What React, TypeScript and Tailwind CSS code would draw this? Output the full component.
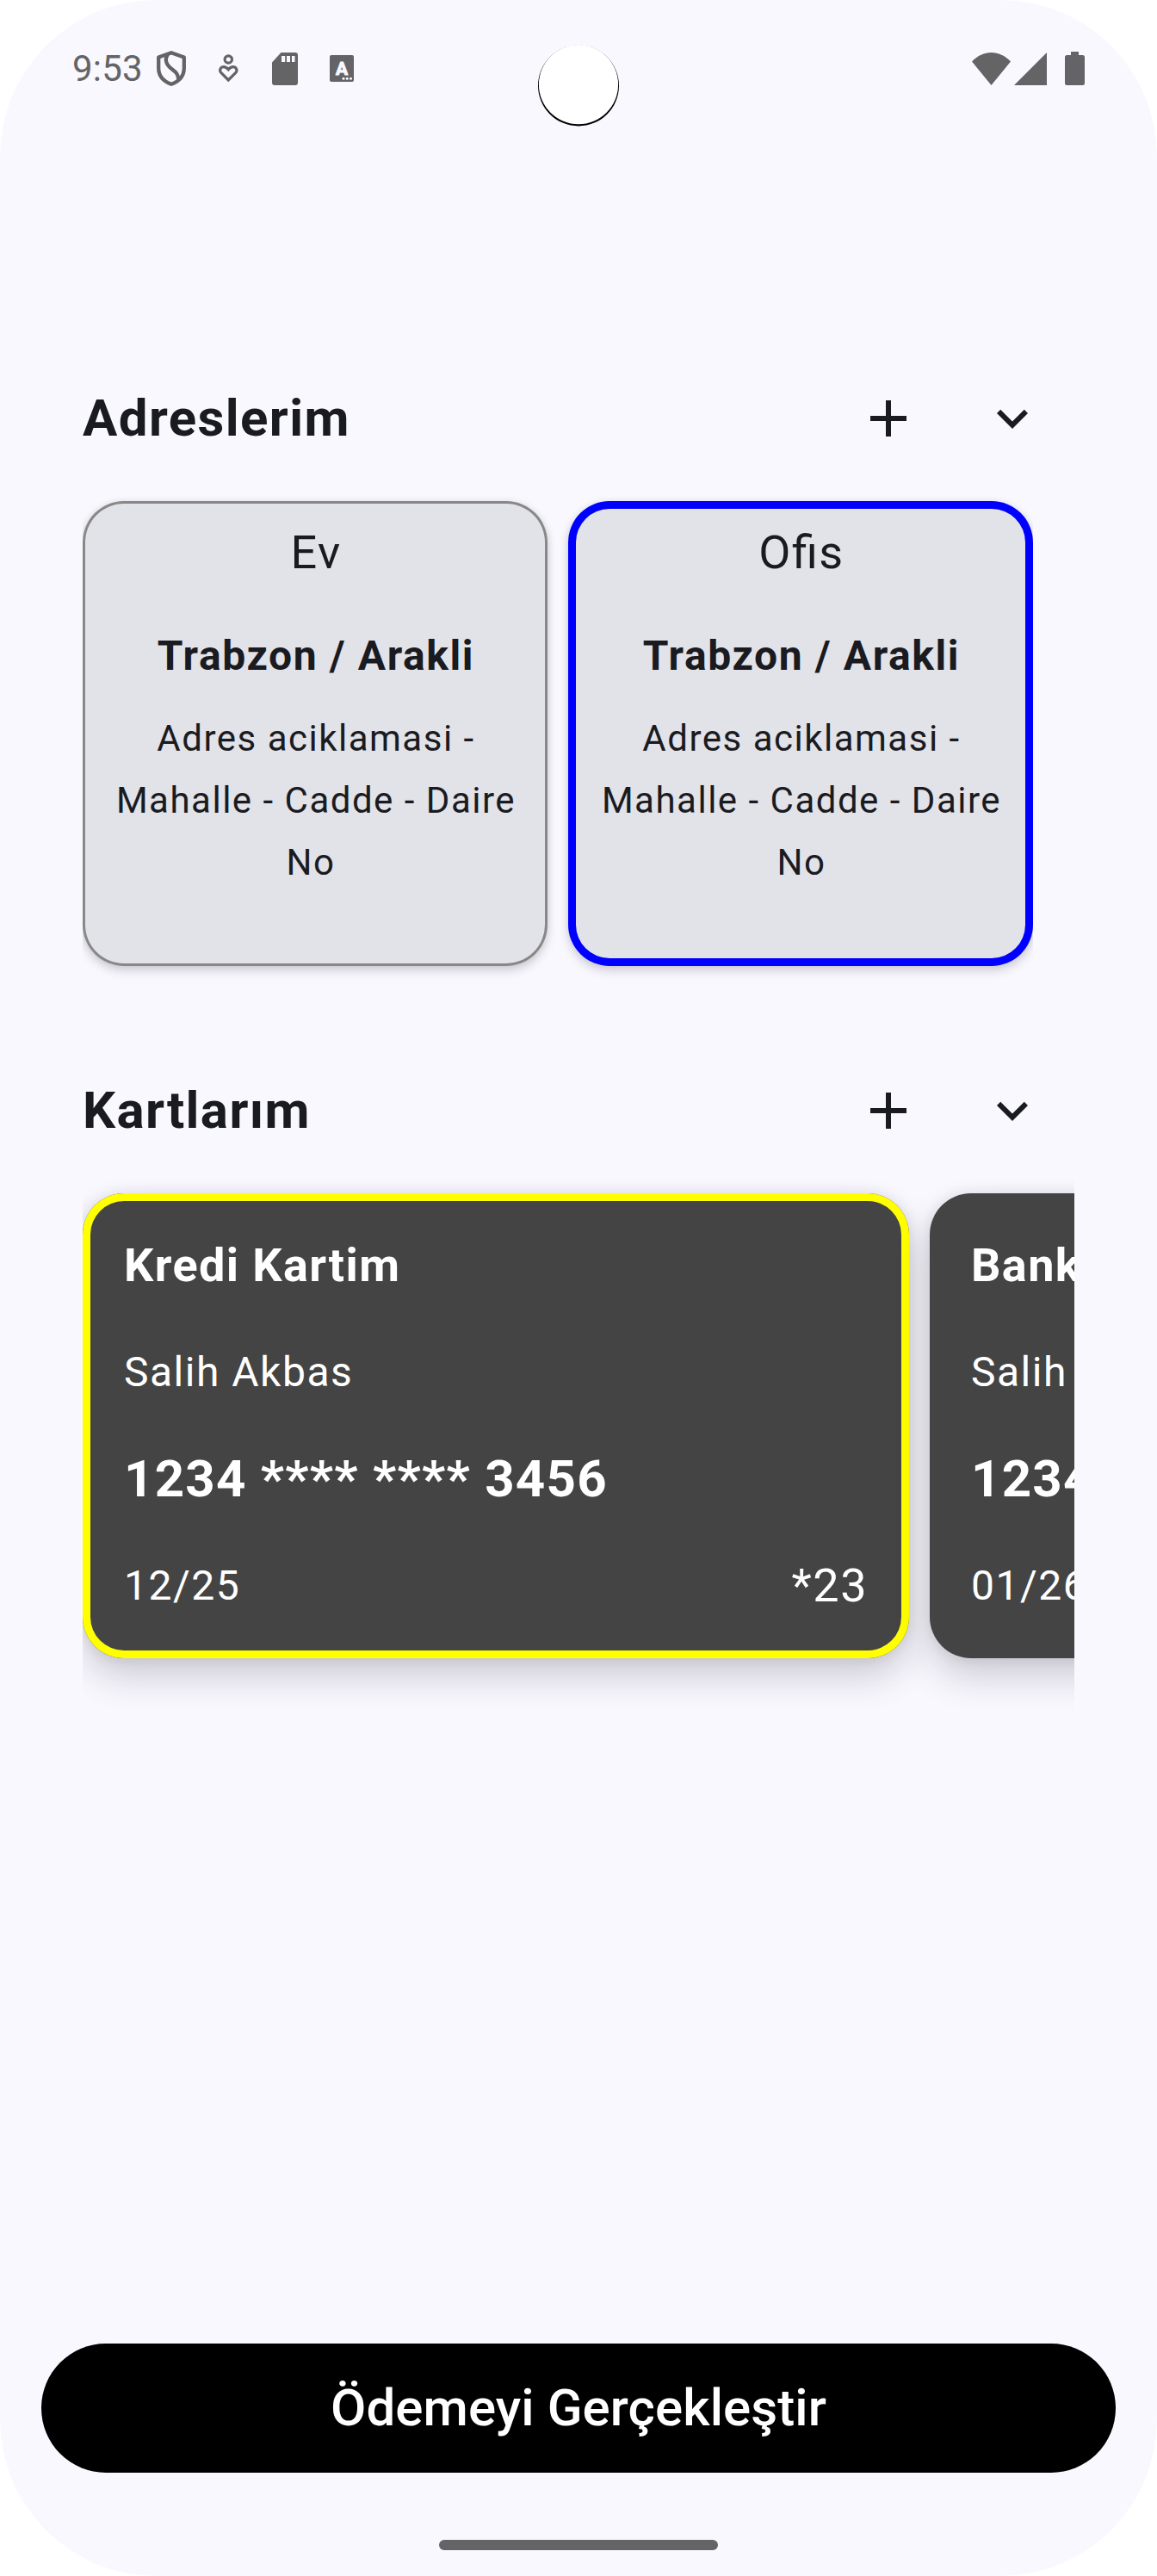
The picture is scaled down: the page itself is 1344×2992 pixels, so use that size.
const ink = "#646466";

function ShieldIcon() {
  return (
    <svg width="34" height="41" viewBox="0 0 34 41" fill="none" stroke={ink} strokeWidth="4.3" strokeLinejoin="round">
      <path d="M17 2.200 31.800 7.500V20C31.800 29.500 26 35.500 17 38.800 8 35.500 2.200 29.500 2.200 20V7.500Z" />
      <path d="M13 4C9.500 9 10.500 14.500 14.500 18.500 19 23 25.500 25 25 33" />
    </svg>
  );
}

function CareIcon() {
  return (
    <svg width="23" height="33" viewBox="0 0 23 33" fill="none" stroke={ink} strokeWidth="3.2">
      <circle cx="11.3" cy="6" r="4.200" />
      <path d="M11.300 30 3 21.700C0 18.500 2.500 14.700 6 14.700 8.500 14.700 10 16.200 11.300 17.800 12.600 16.200 14.100 14.700 16.600 14.700 20.100 14.700 22.600 18.500 19.600 21.700Z" />
    </svg>
  );
}

function SdCardIcon() {
  return (
    <svg width="30" height="38" viewBox="0 0 30 38" fill={ink}>
      <path
        fillRule="evenodd"
        d="M10.500 0H27A3 3 0 0 1 30 3V35A3 3 0 0 1 27 38H3A3 3 0 0 1 0 35V11.500ZM11 4V11H15.200V4ZM17 4V11H21V4ZM23 4V11H26.500V4Z"
      />
    </svg>
  );
}

function LetterIcon() {
  return (
    <svg width="28" height="31" viewBox="0 0 28 31">
      <rect width="28" height="31" rx="2" fill={ink} />
      <text
        x="14"
        y="22.800"
        textAnchor="middle"
        fontFamily="Roboto"
        fontWeight="700"
        fontSize="21"
        fill="#f9f8ff"
        stroke="#f9f8ff"
        strokeWidth="1"
        strokeLinejoin="round"
      >
        A
      </text>
      <g fill="#f9f8ff">
        <circle cx="16" cy="27.200" r="1.500" />
        <circle cx="20.300" cy="27.200" r="1.500" />
        <circle cx="24.500" cy="27.200" r="1.500" />
      </g>
    </svg>
  );
}

function StatusBar() {
  return (
    <div className="relative flex h-[159px] items-center justify-between pr-[84px] pl-[84px]">
      <div className="flex items-center">
        <span className="mr-[16px] w-[82px] text-[42px] leading-[48px] tracking-[0.2px] text-[#646466]">9:53</span>
        <ShieldIcon />
        <span className="w-[38px]" />
        <CareIcon />
        <span className="w-[39px]" />
        <SdCardIcon />
        <span className="w-[37px]" />
        <LetterIcon />
      </div>
      <div className="flex items-center">
        <svg width="45" height="38" viewBox="0 0 45 38" fill={ink}>
          <path d="M0 10.500C13-3.500 32-3.500 45 10.500L22.500 38Z" />
        </svg>
        <svg className="ml-[4px]" width="38" height="38" viewBox="0 0 38 38" fill={ink}>
          <path d="M38 0V38H0Z" />
        </svg>
        <svg className="ml-[21px]" width="23" height="39" viewBox="0 0 23 39" fill={ink}>
          <path d="M7 0H16V4H20.500A2.500 2.500 0 0 1 23 6.500V36.500A2.500 2.500 0 0 1 20.500 39H2.500A2.500 2.500 0 0 1 0 36.500V6.500A2.500 2.500 0 0 1 2.500 4H7Z" />
        </svg>
      </div>
      <svg className="absolute top-[50px] left-[622px]" width="100" height="100" viewBox="0 0 100 100">
        <circle cx="50" cy="49.400" r="47" fill="#000" />
        <circle cx="50" cy="48.200" r="46.100" fill="#fff" />
      </svg>
    </div>
  );
}

function SectionHeader({ title }: { title: string }) {
  return (
    <div className="flex h-[144px] items-center">
      <h2 className="flex-1 text-[60px] leading-[72px] font-bold tracking-[1.4px]">{title}</h2>
      <button className="flex size-[144px] items-center justify-center">
        <svg width="72" height="72" viewBox="0 0 24 24" fill="#1a1b20">
          <path d="M19 13h-6v6h-2v-6H5v-2h6V5h2v6h6z" />
        </svg>
      </button>
      <button className="flex size-[144px] items-center justify-center">
        <svg width="72" height="72" viewBox="0 0 24 24" fill="#1a1b20">
          <path d="M7.410 8.590 12 13.170l4.590-4.580L18 10l-6 6-6-6z" />
        </svg>
      </button>
    </div>
  );
}

function AddressCard({ name, lines, selected }: { name: string; lines: string[]; selected?: boolean }) {
  return (
    <div
      className={`flex size-[540px] shrink-0 flex-col items-center rounded-[48px] bg-[#e2e2e9] pt-6 pl-[2px] text-center shadow-[0_6px_12px_rgba(25,15,25,0.16),0_0_8px_rgba(25,15,25,0.08)] ${
        selected ? "inset-ring-[9px] inset-ring-[#0000ff]" : "inset-ring-[3px] inset-ring-[#888888]"
      }`}
    >
      <h3 className="text-[54px] leading-[72px] tracking-[1.5px] [font-feature-settings:'liga'_1]">{name}</h3>
      <p className="mt-12 text-[48px] leading-[72px] font-bold tracking-[1.6px]">Trabzon / Arakli</p>
      <div className="mt-6 text-[42px] leading-[72px] tracking-[1.5px]">
        {lines.map((line) => (
          <p key={line} className="whitespace-nowrap">
            {line}
          </p>
        ))}
      </div>
    </div>
  );
}

type Card = { title: string; owner: string; number: string; expiry: string; cvv: string; selected?: boolean };

function PaymentCard({ title, owner, number, expiry, cvv, selected }: Card) {
  return (
    <div
      className={`flex h-[540px] w-[960px] shrink-0 flex-col justify-between rounded-[48px] bg-[#444444] p-12 leading-[72px] tracking-[1.5px] whitespace-nowrap text-white shadow-[0_22px_42px_rgba(25,15,25,0.19),0_0_16px_rgba(25,15,25,0.1)] ${
        selected ? "inset-ring-[9px] inset-ring-[#ffff00]" : ""
      }`}
    >
      <h3 className="text-[54px] leading-[72px] font-bold tracking-[1.4px]">{title}</h3>
      <p className="text-[48px] leading-[72px]">{owner}</p>
      <p className="text-[60px] leading-[72px] font-bold tracking-[1.25px]">{number}</p>
      <div className="flex items-center justify-between">
        <span className="text-[48px] leading-[72px]">{expiry}</span>
        <span className="text-[54px] leading-[72px]">{cvv}</span>
      </div>
    </div>
  );
}

export default function App() {
  return (
    <div className="h-[2992px] w-[1344px] bg-white">
      <div className="flex h-full w-full flex-col overflow-hidden rounded-[182px] bg-[#f9f8ff] font-['Roboto',sans-serif] text-[#1a1b20]">
        <StatusBar />
        <main className="mt-[255px] flex flex-1 flex-col gap-24 px-24">
          <section>
            <SectionHeader title="Adreslerim" />
            <div className="mt-6 flex w-[1104px] gap-6 overflow-x-clip">
              <AddressCard name="Ev" lines={["Adres aciklamasi -", "Mahalle - Cadde - Daire", "No\u00a0"]} />
              <AddressCard name="Ofis" lines={["Adres aciklamasi -", "Mahalle - Cadde - Daire", "No"]} selected />
            </div>
          </section>
          <section>
            <SectionHeader title="Kartlarım" />
            <div className="mt-6 flex gap-6 overflow-x-clip">
              <PaymentCard title="Kredi Kartim" owner="Salih Akbas" number="1234 **** **** 3456" expiry="12/25" cvv="*23" selected />
              <PaymentCard title="Banka Kartim" owner="Salih Akbas" number="1234 **** **** 3456" expiry="01/26" cvv="*23" />
            </div>
          </section>
        </main>
        <div className="px-12">
          <button className="h-[150px] w-full rounded-full bg-black text-[60px] leading-[72px] font-medium tracking-[0.1px] text-white">
            Ödemeyi Gerçekleştir
          </button>
        </div>
        <div className="mx-auto mt-[78px] mb-[30px] h-[12px] w-[324px] rounded-full bg-[#646466]" />
      </div>
    </div>
  );
}
